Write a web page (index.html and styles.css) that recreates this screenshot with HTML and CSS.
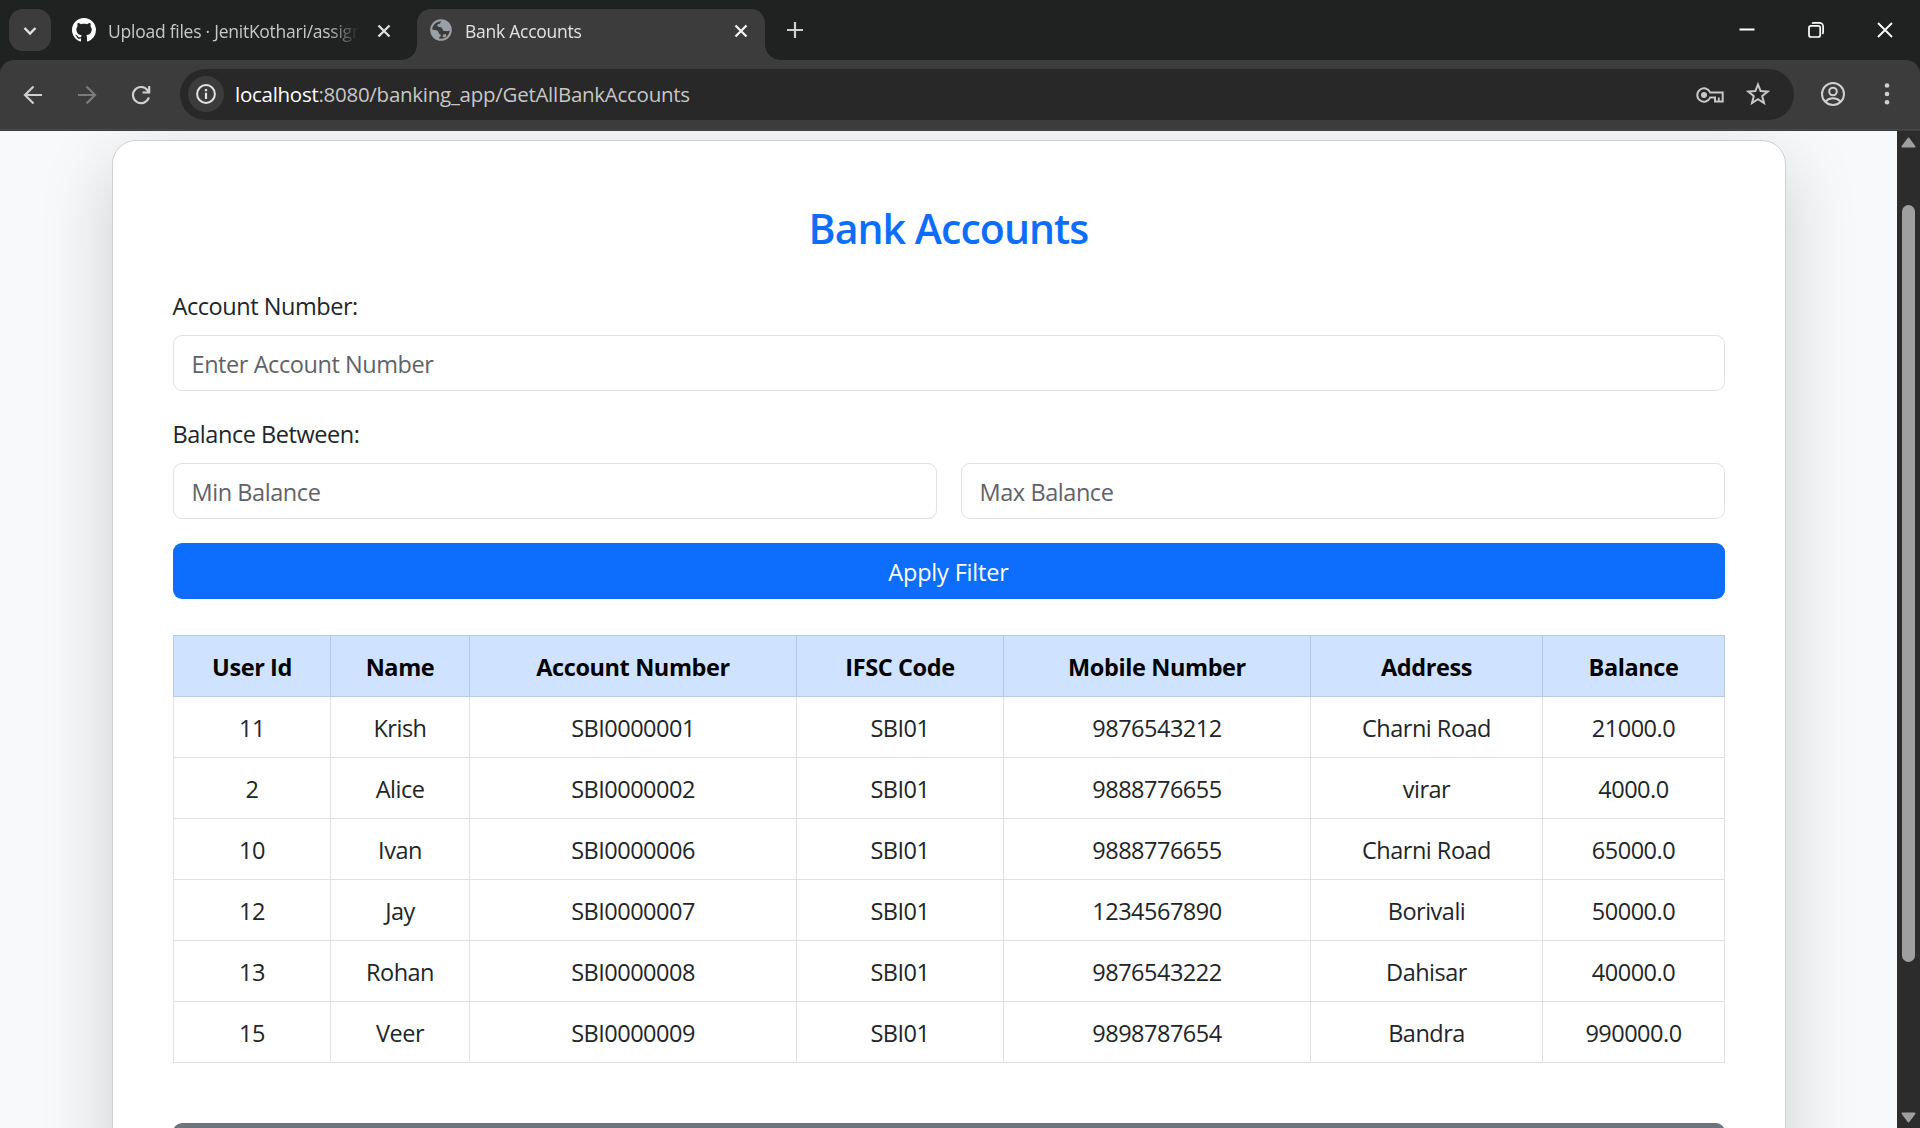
FILE: index.html
```
<!DOCTYPE html>
<html lang="en">
<head>
<meta charset="utf-8">
<title>Bank Accounts</title>
<link rel="stylesheet" href="styles.css">
</head>
<body>
<header class="tabstrip">
  <button class="tab-search" aria-label="Search tabs"><svg width="14" height="10" viewBox="0 0 14 10"><path d="M1.5 2 7 7.5 12.500 2" fill="none" stroke="#e3e3e3" stroke-width="2.400"/></svg></button>
  <div class="tab">
    <svg class="favicon" width="24" height="24" viewBox="0 0 16 16"><path fill="#fff" d="M8 0C3.580 0 0 3.580 0 8c0 3.540 2.290 6.530 5.470 7.590.4.070.55-.17.55-.38 0-.19-.01-.82-.01-1.490-2.010.37-2.530-.49-2.690-.94-.09-.23-.48-.94-.82-1.130-.28-.15-.68-.52-.01-.53.63-.01 1.080.58 1.230.82.72 1.210 1.870.87 2.330.66.070-.52.28-.87.51-1.070-1.780-.2-3.640-.89-3.640-3.950 0-.87.31-1.590.82-2.150-.08-.2-.36-1.020.08-2.120 0 0 .67-.21 2.200.82.64-.18 1.320-.27 2-.27s1.360.09 2 .27c1.530-1.040 2.200-.82 2.200-.82.44 1.100.16 1.920.08 2.120.51.56.82 1.270.82 2.150 0 3.070-1.870 3.750-3.650 3.950.29.25.54.73.54 1.480 0 1.070-.01 1.930-.01 2.200 0 .21.15.46.55.38A8.010 8.010 0 0 0 16 8c0-4.420-3.580-8-8-8Z"/></svg>
    <span class="tab-title">Upload files · JenitKothari/assign</span>
    <svg class="tab-close" width="14" height="14" viewBox="0 0 14 14"><path d="m1.500 1.500 11 11m0-11-11 11" stroke="#dedede" stroke-width="2.300"/></svg>
  </div>
  <div class="tab active">
    <svg class="favicon" width="22" height="22" viewBox="0 0 22 22"><circle cx="11" cy="11" r="9.800" fill="none" stroke="#9aa0a6" stroke-width="2"/><path fill="#9aa0a6" d="M13 1.500C9.800 2.200 11 4.600 9 5c-2 .3-2.300 1.300-1.200 2.500 1.200 1.300 3.700.1 4.300 1.900.6 1.700 1.400 2.600 3 2.700 2.200.1 4.400.3 5.400-1C21 6 18 2 13 1.500ZM1.500 10.500c2.200.3 4.800.3 6.400 1.600 1.300 1 .1 2.200 1.500 2.900 2 .9 2.200 2.200 0 3l-.6 2.300C4.500 19.500 1 15.500 1.500 10.500Zm11.600 5.200 2.700-.6.600 2-2 1.500-1.800-.8Z"/></svg>
    <span class="tab-title">Bank Accounts</span>
    <svg class="tab-close" width="14" height="14" viewBox="0 0 14 14"><path d="m1.500 1.500 11 11m0-11-11 11" stroke="#f2f2f2" stroke-width="2.300"/></svg>
  </div>
  <svg class="new-tab" width="16" height="16" viewBox="0 0 16 16"><path d="M8 0v16M0 8h16" stroke="#d0d0d0" stroke-width="2.200"/></svg>
  <div class="window-controls">
    <svg width="16" height="16" viewBox="0 0 16 16"><path d="M.5 7.500h15" stroke="#fff" stroke-width="2"/></svg>
    <svg width="16" height="16" viewBox="0 0 16 16" fill="none" stroke="#fff" stroke-width="1.700"><rect x="1" y="3.800" width="11.200" height="11.200" rx="2"/><path d="M4 1.500C4.500 1 5.200.9 6 .9h5.500a3.600 3.600 0 0 1 3.600 3.600V10c0 .9-.2 1.500-.7 2"/></svg>
    <svg width="16" height="16" viewBox="0 0 16 16"><path d="m1 1 14 14M15 1 1 15" stroke="#fff" stroke-width="1.800"/></svg>
  </div>
</header>
<nav class="toolbar">
  <div class="nav-icons">
    <svg width="20" height="20" viewBox="0 0 20 20" fill="none" stroke="#d0d0d0" stroke-width="2.200"><path d="M19 10H2M10.500 1.500 2 10l8.500 8.500"/></svg>
    <svg width="20" height="20" viewBox="0 0 20 20" fill="none" stroke="#7b7b7b" stroke-width="2.200"><path d="M1 10h17M9.500 1.500 18 10l-8.500 8.500"/></svg>
    <svg width="20" height="20" viewBox="0 0 20 20" fill="none" stroke="#d0d0d0" stroke-width="2.200"><path d="M17.800 12.500A8.100 8.100 0 1 1 16.600 5.300L18.200 7M11.500 7.500h6.700V1"/></svg>
  </div>
  <div class="omnibox">
    <span class="site-info"><svg width="20" height="20" viewBox="0 0 20 20"><circle cx="10" cy="10" r="8.900" fill="none" stroke="#e3e3e3" stroke-width="2"/><path d="M10 8.800V15M10 5v2.200" stroke="#e3e3e3" stroke-width="2.200"/></svg></span>
    <span class="url"><b>localhost</b>:8080/banking_app/GetAllBankAccounts</span>
    <svg class="key" width="28" height="18" viewBox="0 0 28 18"><g fill="none" stroke="#c7c7c7" stroke-width="2"><path d="M14.200 6.500A6.700 6.700 0 1 0 14.200 11.500H19V15.500h7.700v-9Z"/><path d="M22.800 15.500v-4" stroke-width="1.800"/></g><circle cx="8" cy="9" r="3" fill="#c7c7c7"/></svg>
    <svg class="star" width="24" height="24" viewBox="0 0 24 24"><path d="m12 2.500 2.600 6.600 7 .5-5.400 4.500 1.800 6.900-6-3.800-6 3.800 1.800-6.900-5.400-4.500 7-.5Z" fill="none" stroke="#c7c7c7" stroke-width="2"/></svg>
  </div>
  <svg class="profile" width="24" height="24" viewBox="0 0 24 24" fill="none" stroke="#d0d0d0" stroke-width="2"><circle cx="12" cy="12" r="11"/><circle cx="12" cy="9.500" r="3.800"/><path d="M4.500 19.500c4-4.200 11-4.200 15 0"/></svg>
  <svg class="more" width="6" height="24" viewBox="0 0 6 24" fill="#d0d0d0"><circle cx="3" cy="3.500" r="2.300"/><circle cx="3" cy="12" r="2.300"/><circle cx="3" cy="20.300" r="2.300"/></svg>
</nav>
<div class="viewport">
  <main class="page">
    <section class="card">
      <h3>Bank Accounts</h3>
      <form>
        <label for="acc">Account Number:</label>
        <input id="acc" placeholder="Enter Account Number">
        <label for="min">Balance Between:</label>
        <div class="row">
          <input id="min" placeholder="Min Balance">
          <input placeholder="Max Balance">
        </div>
        <button type="button" class="btn primary">Apply Filter</button>
      </form>
      <table>
        <colgroup><col class="c-id"><col class="c-name"><col class="c-acc"><col class="c-ifsc"><col class="c-mobile"><col class="c-addr"><col class="c-bal"></colgroup>
        <thead><tr><th>User Id</th><th>Name</th><th>Account Number</th><th>IFSC Code</th><th>Mobile Number</th><th>Address</th><th>Balance</th></tr></thead>
        <tbody>
          <tr><td>11</td><td>Krish</td><td>SBI0000001</td><td>SBI01</td><td>9876543212</td><td>Charni Road</td><td>21000.0</td></tr>
          <tr><td>2</td><td>Alice</td><td>SBI0000002</td><td>SBI01</td><td>9888776655</td><td>virar</td><td>4000.0</td></tr>
          <tr><td>10</td><td>Ivan</td><td>SBI0000006</td><td>SBI01</td><td>9888776655</td><td>Charni Road</td><td>65000.0</td></tr>
          <tr><td>12</td><td>Jay</td><td>SBI0000007</td><td>SBI01</td><td>1234567890</td><td>Borivali</td><td>50000.0</td></tr>
          <tr><td>13</td><td>Rohan</td><td>SBI0000008</td><td>SBI01</td><td>9876543222</td><td>Dahisar</td><td>40000.0</td></tr>
          <tr><td>15</td><td>Veer</td><td>SBI0000009</td><td>SBI01</td><td>9898787654</td><td>Bandra</td><td>990000.0</td></tr>
        </tbody>
      </table>
      <div class="btn secondary"></div>
    </section>
  </main>
  <aside class="scrollbar">
    <svg width="15" height="11" viewBox="0 0 15 11"><path d="M7.500 1.500 13.500 9.500h-12Z" fill="#9f9f9f" stroke="#9f9f9f" stroke-width="2" stroke-linejoin="round"/></svg>
    <div class="thumb"></div>
    <svg width="15" height="11" viewBox="0 0 15 11"><path d="M7.500 9.500 13.500 1.500h-12Z" fill="#9f9f9f" stroke="#9f9f9f" stroke-width="2" stroke-linejoin="round"/></svg>
  </aside>
</div>
</body>
</html>
```
FILE: styles.css
```
* { box-sizing: border-box; }
body {
  margin: 0;
  height: 1128px;
  overflow: hidden;
  display: flex;
  flex-direction: column;
  background: #202221;
  font-family: "Open Sans", "Noto Sans", sans-serif;
}
svg { display: block; flex: none; }

/* Tab strip */
.tabstrip {
  height: 60px;
  flex: none;
  display: flex;
  align-items: flex-start;
  padding: 9px 15px 0 9px;
}
.tab-search {
  width: 42px;
  height: 42px;
  padding: 2px 0 0;
  border: 0;
  border-radius: 14px;
  background: #3c3c3c;
  display: flex;
  align-items: center;
  justify-content: center;
}
.tab {
  width: 366px;
  height: 51px;
  padding: 0 26px 9px 21px;
  display: flex;
  align-items: center;
  color: #c7c7c7;
}
.tab-title {
  flex: 1;
  margin-left: 12px;
  padding-top: 2px;
  overflow: hidden;
  white-space: nowrap;
  font-size: 17.500px;
  line-height: 26px;
  letter-spacing: -0.25px;
  mask-image: linear-gradient(to right, #000 calc(100% - 32px), transparent);
}
.tab .tab-close { margin-left: 18px; margin-top: 1px; }
.tab.active {
  position: relative;
  width: 348px;
  padding: 0 17px 9px 13px;
  border-radius: 14px 14px 0 0;
  background: #3c3c3c;
  color: #e3e3e3;
}
.tab.active .tab-title { margin-left: 13px; }
.tab.active::before, .tab.active::after {
  content: "";
  position: absolute;
  bottom: 0;
  width: 15px;
  height: 15px;
}
.tab.active::before { left: -15px; background: radial-gradient(circle at 0 0, transparent 14.500px, #3c3c3c 15px); }
.tab.active::after { right: -15px; background: radial-gradient(circle at 100% 0, transparent 14.500px, #3c3c3c 15px); }
.new-tab { margin: 13px 0 0 22px; }
.window-controls {
  margin: 12px 4px 0 auto;
  display: flex;
  gap: 53px;
  padding-right: 8px;
  padding-top: 1px;
}

/* Toolbar */
.toolbar {
  height: 71px;
  flex: none;
  display: flex;
  align-items: center;
  padding: 0 30px 2px 23px;
  border-radius: 14px 14px 0 0;
  border-bottom: 1px solid #3c3c3c;
  box-shadow: inset 0 -1px #494949;
  background: #3c3c3c;
}
.nav-icons { display: flex; gap: 34px; padding-top: 1px; }
.omnibox {
  width: 1614px;
  height: 51px;
  margin-left: 29px;
  padding: 0 24px 0 8px;
  border-radius: 26px;
  background: #282828;
  display: flex;
  align-items: center;
}
.site-info {
  width: 36px;
  height: 36px;
  border-radius: 50%;
  background: #3c3c3c;
  display: flex;
  align-items: center;
  justify-content: center;
}
.url {
  flex: 1;
  margin-left: 11px;
  font-size: 20.500px;
  letter-spacing: -0.27px;
  color: #c7c7c7;
}
.url b { font-weight: 400; color: #fff; }
.key { margin-top: 1px; }
.star { margin-left: 22px; }
.profile { margin-left: 27px; }
.more { margin-left: auto; }

/* Page */
.viewport {
  flex: 1;
  min-height: 0;
  display: flex;
  overflow: hidden;
}
.page {
  flex: 1;
  padding: 9px 111.500px 0;
  overflow: hidden;
  background: #f8f9fb;
}
.card {
  height: 1100px;
  padding: 60px;
  border: 1px solid #cfd0d1;
  border-radius: 24px;
  background: #fff;
  box-shadow: 0 24px 72px rgba(0, 0, 0, 0.175);
  color: #212529;
  font-size: 23.500px;
  line-height: 36px;
}
h3 {
  margin: 0 0 34px;
  padding-top: 2px;
  font-size: 41px;
  line-height: 50px;
  font-weight: 550;
  letter-spacing: -0.95px;
  text-align: center;
  color: #0d6efd;
}
form { display: flex; flex-direction: column; }
label { padding-top: 1px; margin-bottom: 11px; letter-spacing: -0.45px; }
input {
  width: 100%;
  height: 56px;
  margin: 0 0 24px;
  padding: 2px 18px 0;
  border: 1px solid #dee2e6;
  border-radius: 9px;
  background: #fff;
  font: inherit;
  letter-spacing: -0.43px;
}
input::placeholder { color: #5f6368; opacity: 1; }
.row { display: flex; gap: 24px; }
.btn {
  width: 100%;
  height: 56px;
  border: 0;
  border-radius: 9px;
  padding: 2px 0 0;
  font: inherit;
  letter-spacing: -0.18px;
  color: #fff;
}
.primary { background: #0d6efd; }
.secondary { margin-top: 60px; background: #6c757d; }

table {
  width: 100%;
  margin-top: 36px;
  border-collapse: collapse;
  table-layout: fixed;
  text-align: center;
}
th, td {
  height: 61px;
  padding: 1px 0 0 1px;
  border: 1px solid #dee2e6;
  letter-spacing: -0.5px;
}
th {
  border-color: #b6c9e8;
  background: #cfe2ff;
  color: #000;
  font-weight: 700;
  letter-spacing: -0.4px;
}
.c-id { width: 157px; }
.c-name { width: 139px; }
.c-acc { width: 327px; }
.c-ifsc { width: 207px; }
.c-mobile { width: 307px; }
.c-addr { width: 232px; }

/* Scrollbar */
.scrollbar {
  width: 23px;
  padding: 6px 0 5px;
  background: #2c2c2c;
  display: flex;
  flex-direction: column;
  align-items: center;
}
.thumb {
  width: 13px;
  height: 757px;
  margin: 57px 0 auto;
  border-radius: 7px;
  background: #9f9f9f;
}
```
